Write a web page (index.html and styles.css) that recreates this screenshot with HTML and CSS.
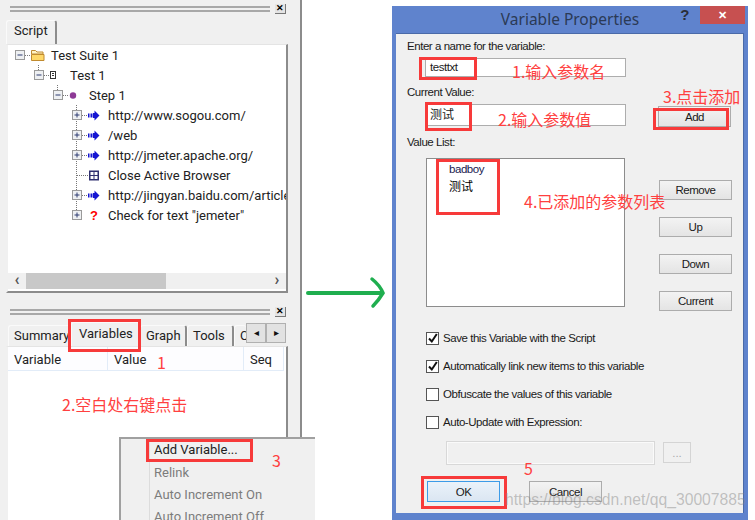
FILE: index.html
```html
<!DOCTYPE html>
<html lang="en">
<head>
  <meta charset="UTF-8" />
  <title>Variable Properties</title>
  <link rel="stylesheet" href="styles.css">
</head>
<body>
  <svg class="defs" xmlns="http://www.w3.org/2000/svg">
    <symbol id="minus" viewBox="0 0 36 20">
      <rect x="0.5" y="5.5" width="9" height="9" fill="#eef0f2" stroke="#9a9a9a"/>
      <path d="M2.5 10h5" stroke="#2c3a70"/>
    </symbol>
    <symbol id="plus" viewBox="0 0 36 20">
      <rect x="0.5" y="5.5" width="9" height="9" fill="#eef0f2" stroke="#9a9a9a"/>
      <path d="M2.5 10h5M5 7.5v5" stroke="#2c3a70"/>
    </symbol>
    <symbol id="stem" viewBox="0 0 36 20">
      <path d="M4.5 -2v7" stroke="#777" stroke-dasharray="1 1"/>
    </symbol>
    <symbol id="trunk" viewBox="0 0 36 20">
      <path d="M4.5 0v20" stroke="#777" stroke-dasharray="1 1"/>
    </symbol>
    <symbol id="folder" viewBox="0 0 36 20">
      <path d="M10 10.500h5" stroke="#777" stroke-dasharray="1 1"/>
      <path d="M16.500 5.500h4l1.500 1.500h6v2h-11.500z" fill="#fff3c4" stroke="#c08a2e"/>
      <path d="M16.500 9.500h12.500v6h-12.500z" fill="#ffd868" stroke="#c08a2e"/>
    </symbol>
    <symbol id="doc" viewBox="0 0 36 20">
      <path d="M10 10.500h5" stroke="#777" stroke-dasharray="1 1"/>
      <rect x="16.500" y="6.500" width="5" height="7" fill="#fff" stroke="#333"/>
      <path d="M18 8.500h2M18 10.500h2" stroke="#333"/>
    </symbol>
    <symbol id="dot" viewBox="0 0 36 20">
      <path d="M10 10.500h6" stroke="#777" stroke-dasharray="1 1"/>
      <circle cx="20" cy="10.500" r="3.200" fill="#8e3a96"/>
    </symbol>
    <symbol id="go" viewBox="0 0 36 20">
      <path d="M10 10.500h5" stroke="#777" stroke-dasharray="1 1"/>
      <path d="M16 8.500h1.500v4h-1.500zM18.500 8.500h2v4h-2zM21 8h1.500v-2.500l5 5-5 5v-2.500h-1.500z" fill="#1414d2"/>
    </symbol>
    <symbol id="grid" viewBox="0 0 36 20">
      <path d="M5 10.500h11" stroke="#777" stroke-dasharray="1 1"/>
      <path d="M17 5.500h10v10h-10z" fill="#2f2f6e"/>
      <path d="M18.500 7h3v3h-3zM22.500 7h3v3h-3zM18.500 11h3v3h-3zM22.500 11h3v3h-3z" fill="#fff"/>
    </symbol>
    <symbol id="tick" viewBox="0 0 12 12">
      <path d="M2 6.500l2.800 3 5-7.500" fill="none" stroke="#111" stroke-width="2"/>
    </symbol>
  </svg>

  <div class="shot">
    <div class="panel">
      <div class="grip"><span class="grip-line"></span><span class="close-box">✕</span></div>
      <div class="tabs">
        <span class="tab tab-script">Script</span>
      </div>
      <div class="box box-tree">
        <ul class="tree">
          <li class="lvl0"><svg class="ico"><use href="#minus"/><use href="#folder"/></svg>Test Suite 1</li>
          <li class="lvl1"><svg class="ico"><use href="#stem"/><use href="#minus"/><use href="#doc"/></svg>Test 1</li>
          <li class="lvl2"><svg class="ico"><use href="#stem"/><use href="#minus"/><use href="#dot"/></svg>Step 1</li>
          <li class="lvl3"><svg class="ico"><use href="#trunk"/><use href="#plus"/><use href="#go"/></svg>http://www.sogou.com/</li>
          <li class="lvl3"><svg class="ico"><use href="#trunk"/><use href="#plus"/><use href="#go"/></svg>/web</li>
          <li class="lvl3"><svg class="ico"><use href="#trunk"/><use href="#plus"/><use href="#go"/></svg>http://jmeter.apache.org/</li>
          <li class="lvl3"><svg class="ico"><use href="#trunk"/><use href="#grid"/></svg>Close Active Browser</li>
          <li class="lvl3"><svg class="ico"><use href="#trunk"/><use href="#plus"/><use href="#go"/></svg>http://jingyan.baidu.com/article</li>
          <li class="lvl3"><svg class="ico"><use href="#stem"/><use href="#plus"/></svg><span class="qmark">?</span>Check for text "jemeter"</li>
        </ul>
        <div class="hscroll">
          <span class="chev">‹</span>
          <span class="thumb"></span>
          <span class="chev chev-right">›</span>
        </div>
      </div>

      <div class="grip grip-lower"><span class="grip-line"></span><span class="close-box">✕</span></div>
      <div class="tabs tabs-lower">
        <span class="tab tab-summary">Summary</span>
        <span class="tab tab-vars">Variables</span>
        <span class="tab tab-graph">Graph</span>
        <span class="tab tab-tools">Tools</span>
        <span class="tab tab-clip">C</span>
        <span class="tab-arrow">◂</span>
        <span class="tab-arrow">▸</span>
      </div>
      <div class="box box-vars">
        <div class="vars-head">
          <span>Variable</span>
          <span>Value</span>
          <span>Seq</span>
        </div>
      </div>
    </div>

    <div class="gutter">
      <svg class="arrow" width="90" height="36" viewBox="0 0 90 36">
        <path d="M6 18H80" stroke="#1fae4f" stroke-width="4" stroke-linecap="round"/>
        <path d="M70 4c5 4 9 9 11 14-3 5-6 9-10 13" fill="none" stroke="#1fae4f" stroke-width="3.500" stroke-linecap="round"/>
      </svg>
    </div>

    <div class="dialog">
      <div class="titlebar">
        <span class="title">Variable Properties</span>
        <div class="caption">
          <span class="help">?</span>
          <span class="close">✕</span>
        </div>
      </div>
      <div class="client">
        <div class="label">Enter a name for the variable:</div>
        <div class="input input-name">testtxt</div>
        <div class="label label-current">Current Value:</div>
        <div class="value-row">
          <div class="input input-value">测试</div>
          <button class="btn btn-add">Add</button>
        </div>
        <div class="label label-list">Value List:</div>
        <div class="list-row">
          <div class="listbox">
            <div>badboy</div>
            <div class="list-cjk">测试</div>
          </div>
          <div class="side-btns">
            <button class="btn">Remove</button>
            <button class="btn">Up</button>
            <button class="btn">Down</button>
            <button class="btn">Current</button>
          </div>
        </div>
        <div class="checks">
          <label class="check"><span class="cb"><svg width="12" height="12"><use href="#tick"/></svg></span>Save this Variable with the Script</label>
          <label class="check"><span class="cb"><svg width="12" height="12"><use href="#tick"/></svg></span>Automatically link new items to this variable</label>
          <label class="check"><span class="cb"></span>Obfuscate the values of this variable</label>
          <label class="check"><span class="cb"></span>Auto-Update with Expression:</label>
        </div>
        <div class="expr-row">
          <div class="expr-input"></div>
          <button class="btn-more">...</button>
        </div>
        <div class="footer">
          <button class="btn btn-ok">OK</button>
          <button class="btn">Cancel</button>
        </div>
      </div>
    </div>

    <div class="menu">
      <div class="menu-item">Add Variable...</div>
      <div class="menu-item off">Relink</div>
      <div class="menu-item off">Auto Increment On</div>
      <div class="menu-item off">Auto Increment Off</div>
    </div>

    <!-- red markup drawn on top of the screenshot -->
    <span class="mark mark-tab"></span>
    <span class="mark mark-menu"></span>
    <span class="mark mark-name"></span>
    <span class="mark mark-value"></span>
    <span class="mark mark-add"></span>
    <span class="mark mark-list"></span>
    <span class="mark mark-ok"></span>

    <span class="note note-1">1</span>
    <span class="note note-2">2.空白处右键点击</span>
    <span class="note note-3">3</span>
    <span class="note note-a">1.输入参数名</span>
    <span class="note note-b">2.输入参数值</span>
    <span class="note note-c">3.点击添加</span>
    <span class="note note-d">4.已添加的参数列表</span>
    <span class="note note-5">5</span>

    <span class="watermark">https://blog.csdn.net/qq_30007885</span>
  </div>
</body>
</html>
```

FILE: styles.css
```css
* {
  box-sizing: border-box;
}

body {
  margin: 0;
  background: #fff;
  font-family: Roboto, sans-serif;
  color: #222;
}

.defs {
  position: absolute;
  width: 0;
  height: 0;
}

.shot {
  position: relative;
  display: flex;
  width: 755px;
  height: 520px;
  overflow: hidden;
}

/* left: Badboy side panels */
.panel {
  display: flex;
  flex-direction: column;
  width: 302px;
  height: 520px;
  padding: 0 12px 0 6px;
  background: #f0f0f0;
  border-right: 2px solid #8c8c8c;
  font-size: 13px;
}

.grip {
  display: flex;
  align-items: center;
  height: 10px;
  margin-top: 4px;
}

.grip-lower {
  margin-top: 14px;
}

.grip-line {
  flex: 1;
  height: 6px;
  margin-left: 4px;
  border-top: 2px solid #a8a8a8;
  border-bottom: 2px solid #a8a8a8;
}

.close-box {
  width: 11px;
  height: 10px;
  margin: 0 2px 0 5px;
  background: #e4e4e4;
  border-right: 1px solid #777;
  border-bottom: 1px solid #777;
  font-size: 9px;
  font-weight: bold;
  line-height: 9px;
  text-align: center;
  color: #000;
}

.tabs {
  display: flex;
  height: 24px;
  margin-top: 6px;
}

.tabs-lower {
  align-items: flex-end;
  height: 23px;
  margin-top: 6px;
}

.tab {
  display: block;
  height: 24px;
  padding: 2px 0 0 7px;
  border-top: 1px solid #fafafa;
  border-left: 1px solid #fafafa;
  border-right: 2px solid #8c8c8c;
  border-radius: 3px 3px 0 0;
}

.tab-script {
  width: 51px;
}

.tabs-lower .tab {
  height: 21px;
  padding: 2px 0 0 5px;
}

.tab-summary {
  width: 63px;
  margin-left: 2px;
}

.tabs-lower .tab-vars {
  width: 69px;
  height: 24px;
  padding: 3px 0 0 7px;
  border-right: 0;
}

.tab-graph {
  width: 47px;
}

.tab-tools {
  width: 47px;
}

.tab-clip {
  width: 12px;
  border-right: 0;
  overflow: hidden;
}

.tab-arrow {
  width: 20px;
  height: 20px;
  margin-bottom: 3px;
  background: #e2e2e2;
  border: 1px solid #b0b0b0;
  font-size: 10px;
  line-height: 18px;
  text-align: center;
  color: #111;
}

.box {
  background: #fff;
  border-top: 1px solid #e4e4e4;
  border-left: 2px solid #f0f0f0;
  border-right: 2px solid #8c8c8c;
}

.box-tree {
  display: flex;
  flex-direction: column;
  height: 249px;
  border-bottom: 2px solid #8c8c8c;
}

.tree {
  flex: 1;
  margin: 0;
  padding: 0;
  list-style: none;
  overflow: hidden;
}

.tree li {
  display: flex;
  align-items: center;
  height: 20px;
  white-space: nowrap;
  overflow: hidden;
}

.lvl0 {
  padding-left: 7px;
}

.lvl1 {
  padding-left: 26px;
}

.lvl2 {
  padding-left: 45px;
}

.lvl3 {
  padding-left: 64px;
}

.ico {
  flex: none;
  width: 36px;
  height: 20px;
}

.qmark {
  width: 0;
  margin-left: -18px;
  margin-right: 18px;
  font-family: "Liberation Sans", sans-serif;
  font-size: 13px;
  font-weight: bold;
  color: #f00;
}

.hscroll {
  display: flex;
  align-items: stretch;
  height: 16px;
  margin-bottom: 2px;
  background: #f0f0f0;
}

.chev {
  width: 18px;
  font-size: 16px;
  font-weight: bold;
  line-height: 13px;
  text-align: center;
  color: #555;
}

.chev-right {
  margin-left: auto;
}

.thumb {
  width: 140px;
  background: #c8c8c8;
}

.box-vars {
  flex: 1;
  border-bottom: 0;
}

.vars-head {
  display: grid;
  grid-template-columns: 100px 136px 40px;
  height: 24px;
}

.vars-head span {
  padding: 5px 0 0 6px;
  border-right: 1px solid #e2ecf8;
  border-bottom: 1px solid #e2ecf8;
  background: #fdfdff;
}

/* middle: green arrow */
.gutter {
  width: 90px;
  padding-top: 275px;
}

.arrow {
  display: block;
}

/* right: dialog */
.dialog {
  display: flex;
  flex-direction: column;
  width: 356px;
  height: 514px;
  margin-top: 6px;
  padding: 0 4px 7px 4px;
  background: #5f83cd;
  font-family: "Liberation Sans", sans-serif;
  font-size: 11.500px;
  letter-spacing: -0.45px;
  color: #1a1a1a;
}

.titlebar {
  display: grid;
  grid-template-columns: 1fr auto 1fr;
  height: 27px;
}

.title {
  grid-column: 2;
  padding-top: 2px;
  font-family: "Noto Sans", sans-serif;
  font-size: 15.500px;
  letter-spacing: 0;
  color: #2b3a55;
}

.caption {
  grid-column: 3;
  display: flex;
  justify-self: end;
}

.help {
  margin-right: 11px;
  font-size: 15px;
  font-weight: bold;
  color: #2a2f3a;
}

.close {
  width: 45px;
  height: 18px;
  margin-right: -1px;
  background: #c75050;
  font-size: 11px;
  font-weight: bold;
  line-height: 18px;
  text-align: center;
  color: #fff;
}

.client {
  flex: 1;
  padding: 5px 0 0 11px;
  background: #f0f0f0;
  border-top: 1px solid #4a6aa8;
  border-right: 1px solid #4a6aa8;
}

.label {
  height: 14px;
  line-height: 14px;
}

.label-current {
  margin-top: 8px;
}

.label-list {
  margin-top: 8px;
}

.input {
  width: 201px;
  margin: 5px 0 0 18px;
  padding-left: 4px;
  background: #fff;
  border: 1px solid #adadad;
}

.input-name {
  height: 19px;
  line-height: 17px;
}

.value-row {
  display: flex;
}

.input-value {
  height: 22px;
  font-family: "Noto Sans CJK SC", sans-serif;
  font-size: 12px;
  letter-spacing: 0;
  line-height: 18px;
}

.btn {
  display: block;
  width: 73px;
  height: 21px;
  padding: 0;
  background: linear-gradient(#f3f3f3, #e4e4e4);
  border: 1px solid #acacac;
  font: inherit;
  letter-spacing: inherit;
  color: inherit;
}

.btn-add {
  margin: 7px 0 0 32px;
}

.list-row {
  display: flex;
  margin-top: 9px;
}

.listbox {
  width: 199px;
  height: 149px;
  margin-left: 19px;
  padding: 4px 0 0 22px;
  background: #fff;
  border: 1px solid #8c8c8c;
  color: #1a1a50;
}

.list-cjk {
  margin-top: 2px;
  font-family: "Noto Sans CJK SC", sans-serif;
  font-size: 12px;
  letter-spacing: 0;
  color: #000;
}

.side-btns {
  display: flex;
  flex-direction: column;
  gap: 17px;
  margin: 22px 0 0 34px;
}

.side-btns .btn {
  height: 20px;
}

.checks {
  display: flex;
  flex-direction: column;
  gap: 14px;
  margin: 20px 0 0 19px;
}

.check {
  display: flex;
  align-items: center;
  gap: 4px;
  height: 14px;
}

.cb {
  display: block;
  flex: none;
  width: 13px;
  height: 13px;
  background: #fff;
  border: 1px solid #555;
}

.cb svg {
  display: block;
  margin: -1px 0 0 0;
}

.expr-row {
  display: flex;
  gap: 9px;
  margin: 13px 0 0 40px;
}

.expr-input {
  width: 207px;
  height: 22px;
  background: #f0f0f0;
  border: 1px solid #fafafa;
  outline: 1px solid #d8d8d8;
}

.btn-more {
  width: 28px;
  height: 21px;
  padding: 0;
  background: #f0f0f0;
  border: 1px solid #d4d4d4;
  font: inherit;
  color: #aaa;
}

.footer {
  display: flex;
  gap: 29px;
  margin: 17px 0 0 20px;
}

.btn-ok {
  background: linear-gradient(#eaf2fa, #dbe6f2);
  border-color: #3c9be8;
}

/* context menu over the lower panel */
.menu {
  position: absolute;
  left: 119px;
  top: 437px;
  width: 196px;
  height: 83px;
  padding: 2px 0 0 33px;
  background: #f0f0f0;
  border-top: 2px solid #a0a0a0;
  border-left: 2px solid #a0a0a0;
  font-size: 13px;
  overflow: hidden;
}

.menu::before {
  content: "";
  position: absolute;
  left: 28px;
  top: 0;
  bottom: 0;
  border-left: 1px solid #dcdcdc;
}

.menu-item {
  height: 22px;
  line-height: 18px;
  white-space: nowrap;
}

.menu-item:first-child {
  height: 23px;
}

.menu-item.off {
  color: #7c7c7c;
}

/* annotations */
.mark {
  position: absolute;
  border: 3px solid #f73a3a;
}

.mark-tab {
  left: 68px;
  top: 319px;
  width: 73px;
  height: 33px;
}

.mark-menu {
  left: 146px;
  top: 439px;
  width: 107px;
  height: 23px;
}

.mark-name {
  left: 419px;
  top: 57px;
  width: 58px;
  height: 23px;
}

.mark-value {
  left: 425px;
  top: 102px;
  width: 47px;
  height: 29px;
}

.mark-add {
  left: 653px;
  top: 108px;
  width: 76px;
  height: 22px;
}

.mark-list {
  left: 436px;
  top: 159px;
  width: 64px;
  height: 56px;
}

.mark-ok {
  left: 421px;
  top: 476px;
  width: 86px;
  height: 33px;
}

.note {
  position: absolute;
  font-family: "Noto Sans CJK SC", sans-serif;
  font-size: 16px;
  line-height: 20px;
  color: #ff4040;
  white-space: nowrap;
}

.note-1 {
  left: 157px;
  top: 352px;
}

.note-2 {
  left: 62px;
  top: 394px;
}

.note-3 {
  left: 272px;
  top: 450px;
}

.note-a {
  left: 512px;
  top: 61px;
}

.note-b {
  left: 498px;
  top: 109px;
}

.note-c {
  left: 663px;
  top: 86px;
}

.note-d {
  left: 524px;
  top: 191px;
}

.note-5 {
  left: 524px;
  top: 458px;
}

.watermark {
  position: absolute;
  left: 505px;
  top: 490px;
  font-family: "Liberation Sans", sans-serif;
  font-size: 15.700px;
  line-height: 20px;
  color: rgba(130, 130, 130, 0.45);
  white-space: nowrap;
}
```
